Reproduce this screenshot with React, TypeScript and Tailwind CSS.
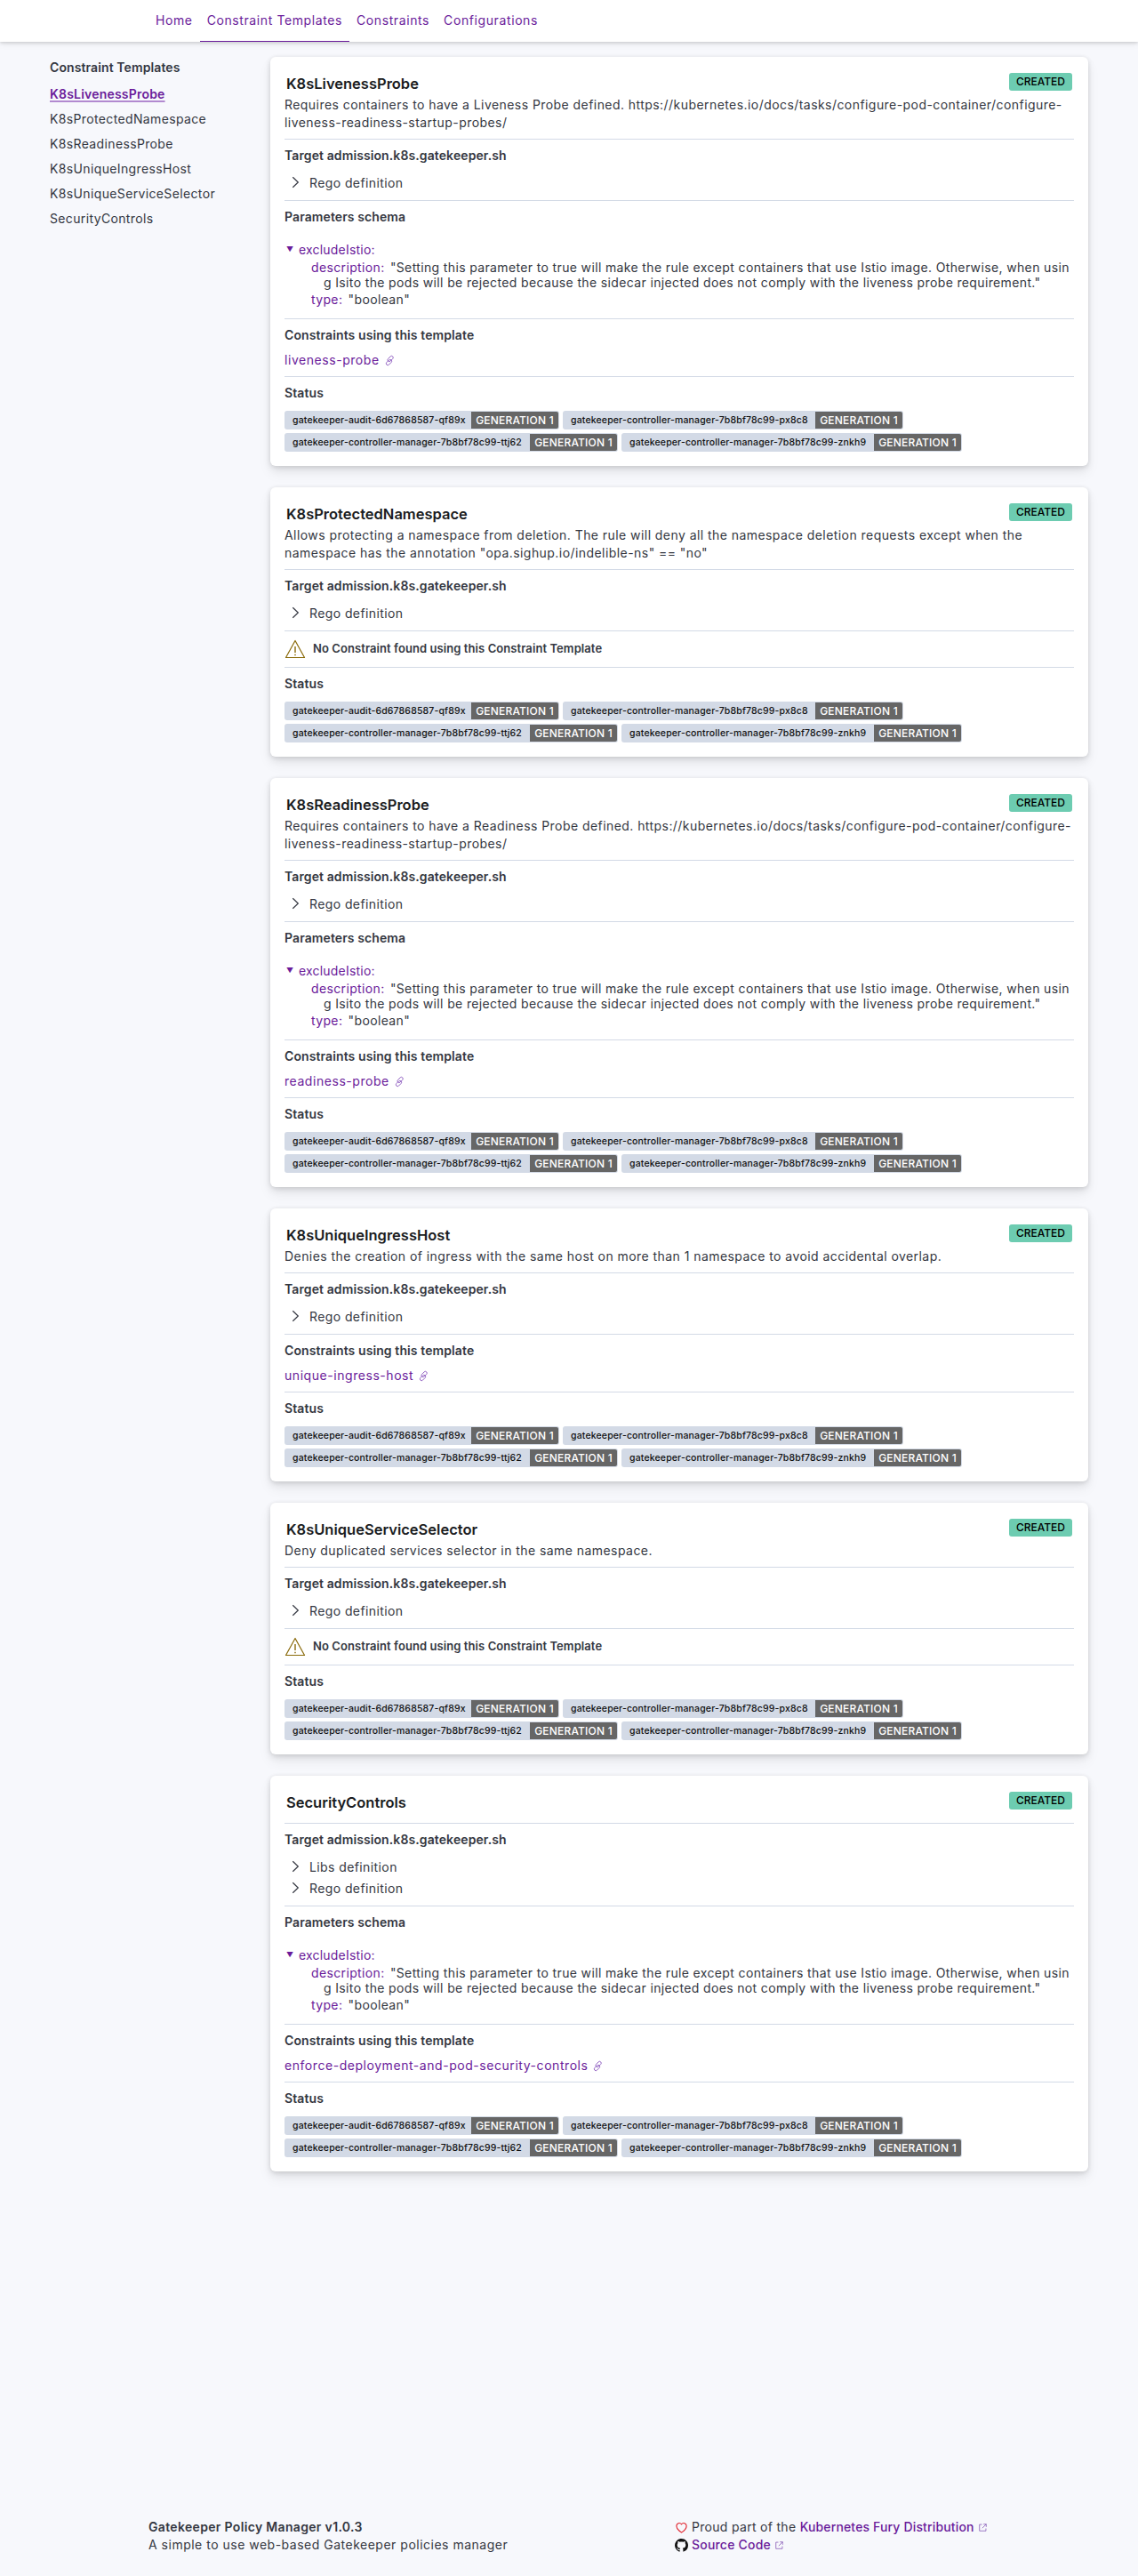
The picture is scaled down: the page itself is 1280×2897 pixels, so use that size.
import React from "react";

const font = { fontFamily: "Inter, 'Liberation Sans', sans-serif" };

function Chevron() {
  return (
    <svg width="16" height="16" viewBox="0 0 16 16" className="shrink-0" fill="none" stroke="#343741" strokeWidth="1.200">
      <path d="M5.300 2.200 11.300 8l-6 5.800" />
    </svg>
  );
}

function LinkIcon() {
  return (
    <svg width="13" height="13" viewBox="0 0 16 16" fill="none" stroke="#8e5cc0" strokeWidth="1.100" className="inline-block ml-[5px] align-[-2px]">
      <rect x="6.500" y="1" width="4.500" height="9" rx="2.250" transform="rotate(45 8.750 5.500)" />
      <rect x="4.500" y="6" width="4.500" height="9" rx="2.250" transform="rotate(45 6.750 10.500)" />
    </svg>
  );
}

function External() {
  return (
    <svg width="11" height="11" viewBox="0 0 16 16" fill="none" stroke="#8a5fb8" strokeWidth="1.200" className="shrink-0">
      <path d="M6.500 3H2.500v10.500H13V9.500" />
      <path d="M9 2.500h4.500V7M13.500 2.500 7 9" />
    </svg>
  );
}

function Warning() {
  return (
    <svg width="24" height="24" viewBox="0 0 24 24" fill="none" stroke="#8a6a0a" strokeWidth="1.200" className="shrink-0">
      <path d="M12 2.500 1.500 21.500h21z" strokeLinejoin="round" />
      <path d="M12 9v7M12 17.800v1.400" strokeWidth="1.400" />
    </svg>
  );
}

function Hr() {
  return <div className="h-px bg-[#d3dae6]" />;
}

function H({ children }: { children: React.ReactNode }) {
  return <div className="text-[14px] leading-[20px] font-semibold tracking-[0.1px] text-[#343741]">{children}</div>;
}

const pods: [string, string][] = [
  ["gatekeeper-audit-6d67868587-qf89x", "w-[309px]"],
  ["gatekeeper-controller-manager-7b8bf78c99-px8c8", "w-[383px]"],
  ["gatekeeper-controller-manager-7b8bf78c99-ttj62", "w-[375px]"],
  ["gatekeeper-controller-manager-7b8bf78c99-znkh9", "w-[383px]"],
];

function Status() {
  return (
    <div className="pt-[8px]">
      <H>Status</H>
      <div className="mt-[10px] flex flex-wrap gap-x-[4px] gap-y-[4px]">
        {pods.map(([name, w]) => (
          <div key={name} className={`${w} h-[21px] flex items-stretch justify-between rounded-[3px] bg-[#d3dae6] p-px`}>
            <span className="pl-2 text-[10.500px] leading-[19px] font-medium text-[#111] tracking-[0.15px] whitespace-nowrap">{name}</span>
            <span className="w-[98px] shrink-0 text-center rounded-r-[2px] bg-[#666666] text-white text-[12px] leading-[19px] font-medium tracking-[0.2px] whitespace-nowrap">
              GENERATION 1
            </span>
          </div>
        ))}
      </div>
    </div>
  );
}

function Params() {
  return (
    <div className="pt-[8px] pb-[13px]">
      <H>Parameters schema</H>
      <div className="mt-[16px] text-[14px] leading-[17px] text-[#343741]">
        <div className="flex items-center h-[20px] pl-[2px]">
          <span className="w-[14px] text-[8px] text-[#6a1b9a]">▼</span>
          <span className="text-[#6a1b9a] tracking-[0.2px]">excludeIstio:</span>
        </div>
        <div className="pl-[30px] mt-[2px] tracking-[0.36px]">
          <div className="pl-[14px] -indent-[14px] break-all">
            <span className="text-[#6a1b9a]">description:</span>{" "}
            <span className="ml-[2px]">"Setting this parameter to true will make the rule except containers that use Istio image. Otherwise, when using Isito the pods will be rejected because the sidecar injected does not comply with the liveness probe requirement."</span>
          </div>
          <div className="mt-[2px]">
            <span className="text-[#6a1b9a]">type:</span> <span className="ml-[2px]">"boolean"</span>
          </div>
        </div>
      </div>
    </div>
  );
}

type CardProps = {
  title: string;
  desc?: string;
  libs?: boolean;
  params?: boolean;
  constraint?: string;
};

function Card({ title, desc, libs, params, constraint }: CardProps) {
  return (
    <section className="bg-white rounded-[6px] pt-[16px] px-[16px] pb-[16px] shadow-[0_1px_5px_rgba(0,0,0,0.1),0_3.600px_9px_rgba(0,0,0,0.07),0_8px_15px_rgba(0,0,0,0.06)]">
      <div className="flex items-start justify-between pl-[2px] pr-[2px]">
        <h2 className="text-[16.500px] leading-[28px] font-semibold text-[#1a1c21]">{title}</h2>
        <span className="mt-[2px] h-[20px] w-[71px] text-center rounded-[3px] bg-[#6dccb1] text-[#000] text-[12px] leading-[20px] font-medium">CREATED</span>
      </div>
      {desc ? (
        <p className="text-[14px] leading-[20px] tracking-[0.44px] text-[#343741] mb-[8px]">{desc}</p>
      ) : (
        <div className="h-[9px]" />
      )}
      <Hr />
      <div className="pt-[8px] pb-[8px]">
        <H>Target admission.k8s.gatekeeper.sh</H>
        <div className="mt-[8px] flex flex-col">
          {libs && (
            <div className="flex items-center gap-[8px] pl-[4px] h-[24px] text-[14px] tracking-[0.4px] text-[#343741]">
              <Chevron />
              Libs definition
            </div>
          )}
          <div className="flex items-center gap-[8px] pl-[4px] h-[24px] text-[14px] tracking-[0.4px] text-[#343741]">
            <Chevron />
            Rego definition
          </div>
        </div>
      </div>
      <Hr />
      {params && (
        <>
          <Params />
          <Hr />
        </>
      )}
      {constraint ? (
        <>
          <div className="pt-[8px] pb-[8px]">
            <H>Constraints using this template</H>
            <div className="mt-[8px] text-[14px] leading-[20px] tracking-[0.55px] text-[#6a1b9a]">
              {constraint}
              <LinkIcon />
            </div>
          </div>
          <Hr />
        </>
      ) : (
        <>
          <div className="flex items-center gap-[8px] pl-[0px] h-[40px]">
            <Warning />
            <span className="text-[13px] font-semibold text-[#343741] tracking-[0.08px]">No Constraint found using this Constraint Template</span>
          </div>
          <Hr />
        </>
      )}
      <Status />
    </section>
  );
}

const probeUrl = "https://kubernetes.io/docs/tasks/configure-pod-container/configure-liveness-readiness-startup-probes/";

export default function App() {
  return (
    <div style={font} className="bg-[#f7f8fc] h-[2897px] flex flex-col text-[#343741] overflow-hidden">
      <header className="h-[47px] shrink-0 bg-white shadow-[0_1px_4px_rgba(0,0,0,0.18),0_3px_8px_rgba(0,0,0,0.05)] pl-[167px] flex">
        {["Home", "Constraint Templates", "Constraints", "Configurations"].map((t, i) => (
          <a
            key={t}
            className={`px-[8px] h-[47px] leading-[46px] text-[14px] tracking-[0.6px] text-[#6a1b9a] ${i === 1 ? "border-b border-[#6a1b9a]" : ""}`}
          >
            {t}
          </a>
        ))}
      </header>
      <main className="flex-1 flex pl-[56px] pr-[56px] pt-[17px]">
        <nav className="w-[248px] shrink-0 text-[14px]">
          <div className="font-semibold leading-[24px] tracking-[0.1px] text-[#343741]">Constraint Templates</div>
          <ul className="mt-[4px]">
            <li className="h-[28px] leading-[28px] font-semibold text-[#6a1b9a] underline decoration-2 decoration-[#b28ad0] underline-offset-[2px] tracking-[0.2px]">K8sLivenessProbe</li>
            {["K8sProtectedNamespace", "K8sReadinessProbe", "K8sUniqueIngressHost", "K8sUniqueServiceSelector", "SecurityControls"].map((t) => (
              <li key={t} className="h-[28px] leading-[28px] tracking-[0.36px] text-[#343741]">{t}</li>
            ))}
          </ul>
        </nav>
        <div className="w-[920px] flex flex-col gap-[24px]">
          <Card title="K8sLivenessProbe" desc={`Requires containers to have a Liveness Probe defined. ${probeUrl}`} params constraint="liveness-probe" />
          <Card title="K8sProtectedNamespace" desc={'Allows protecting a namespace from deletion. The rule will deny all the namespace deletion requests except when the namespace has the annotation "opa.sighup.io/indelible-ns" == "no"'} />
          <Card title="K8sReadinessProbe" desc={`Requires containers to have a Readiness Probe defined. ${probeUrl}`} params constraint="readiness-probe" />
          <Card title="K8sUniqueIngressHost" desc="Denies the creation of ingress with the same host on more than 1 namespace to avoid accidental overlap." constraint="unique-ingress-host" />
          <Card title="K8sUniqueServiceSelector" desc="Deny duplicated services selector in the same namespace." />
          <Card title="SecurityControls" libs params constraint="enforce-deployment-and-pod-security-controls" />
        </div>
      </main>
      <footer className="shrink-0 h-[65px] pl-[167px] flex text-[14px] leading-[20px]">
        <div className="w-[592px]">
          <div className="font-semibold tracking-[0.33px]">Gatekeeper Policy Manager v1.0.3</div>
          <div className="tracking-[0.5px]">A simple to use web-based Gatekeeper policies manager</div>
        </div>
        <div>
          <div className="flex items-center gap-[4px]">
            <svg width="15" height="15" viewBox="0 0 24 24" fill="none" stroke="#e0202a" strokeWidth="1.800"><path d="M12 21s-9-6-9-12a5 5 0 0 1 9-3 5 5 0 0 1 9 3c0 6-9 12-9 12z" /></svg>
            <span className="tracking-[0.3px]">Proud part of the <a className="text-[#6a1b9a] font-medium tracking-[0.15px]">Kubernetes Fury Distribution</a></span>
            <External />
          </div>
          <div className="flex items-center gap-[4px]">
            <svg width="15" height="15" viewBox="0 0 16 16" fill="#111"><path d="M8 0C3.580 0 0 3.580 0 8c0 3.540 2.290 6.530 5.470 7.590.4.070.55-.17.55-.38 0-.19-.01-.82-.01-1.490-2.010.37-2.530-.49-2.690-.94-.09-.23-.48-.94-.82-1.130-.28-.15-.68-.52-.01-.53.63-.01 1.080.58 1.230.82.72 1.210 1.870.87 2.330.66.070-.52.280-.87.510-1.070-1.780-.2-3.640-.89-3.640-3.950 0-.87.310-1.590.820-2.150-.08-.2-.36-1.020.08-2.120 0 0 .67-.21 2.200.82.64-.18 1.320-.27 2-.27s1.360.09 2 .27c1.530-1.040 2.200-.82 2.200-.82.440 1.100.16 1.920.08 2.120.51.560.82 1.270.82 2.150 0 3.070-1.870 3.750-3.650 3.950.29.250.54.730.54 1.480 0 1.070-.01 1.930-.01 2.200 0 .21.150.46.55.38A8.010 8.010 0 0 0 16 8c0-4.420-3.580-8-8-8z" /></svg>
            <a className="text-[#6a1b9a] font-medium tracking-[0.2px]">Source Code</a>
            <External />
          </div>
        </div>
      </footer>
    </div>
  );
}
